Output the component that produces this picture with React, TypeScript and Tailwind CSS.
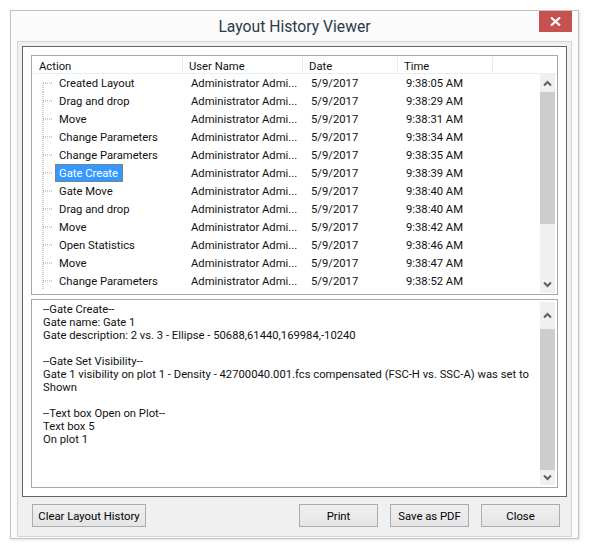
const rows = [
  ["Created Layout", "9:38:05 AM"],
  ["Drag and drop", "9:38:29 AM"],
  ["Move", "9:38:31 AM"],
  ["Change Parameters", "9:38:34 AM"],
  ["Change Parameters", "9:38:35 AM"],
  ["Gate Create", "9:38:39 AM"],
  ["Gate Move", "9:38:40 AM"],
  ["Drag and drop", "9:38:40 AM"],
  ["Move", "9:38:42 AM"],
  ["Open Statistics", "9:38:46 AM"],
  ["Move", "9:38:47 AM"],
  ["Change Parameters", "9:38:52 AM"],
];

const details = [
  "--Gate Create--",
  "Gate name: Gate 1",
  "Gate description: 2 vs. 3 - Ellipse - 50688,61440,169984,-10240",
  "",
  "--Gate Set Visibility--",
  "Gate 1 visibility on plot 1 - Density - 42700040.001.fcs compensated (FSC-H vs. SSC-A) was set to",
  "Shown",
  "",
  "--Text box Open on Plot--",
  "Text box 5",
  "On plot 1",
];

const Chevron = ({ down }: { down?: boolean }) => (
  <svg width="9" height="7" viewBox="0 0 9 7" fill="none">
    <path
      d={down ? "M1 1.5 L4.5 5 L8 1.5" : "M1 5.5 L4.5 2 L8 5.5"}
      stroke="#5f5f5f"
      strokeWidth="2"
    />
  </svg>
);

const Scrollbar = ({ top, thumb, bottom }: { top: number; thumb: number; bottom: number }) => (
  <div className="w-[15px] h-full flex flex-col bg-[#f0f0f0] shrink-0">
    <div className="flex items-center justify-center shrink-0" style={{ height: top }}>
      <Chevron />
    </div>
    <div className="bg-[#cdcdcd] shrink-0" style={{ height: thumb }} />
    <div className="flex-1" />
    <div className="flex items-center justify-center shrink-0" style={{ height: bottom }}>
      <Chevron down />
    </div>
  </div>
);

const Button = ({ label, className }: { label: string; className: string }) => (
  <button
    className={
      "h-[23px] pt-[3px] border border-[#acacac] bg-gradient-to-b from-[#f0f0f0] to-[#e5e5e5] text-[11.3px] text-black whitespace-nowrap " +
      className
    }
  >
    {label}
  </button>
);

export default function App() {
  return (
    <div className="w-[592px] h-[552px] bg-white pt-[10px] pl-[10px] font-['Roboto',sans-serif] text-[11.25px] text-[#111111]">
      <div className="relative w-[569px] h-[529px] border border-[#c4c4c4] bg-[#fbfbfb] flex flex-col shadow-[1px_1px_3px_rgba(0,0,0,0.12)] pb-[1px] px-[6px]">
        <div className="h-[30px] shrink-0 flex items-center justify-center text-[15.7px] text-[#2b3a4a] pt-[1px]">
          Layout History Viewer
        </div>
        <div className="absolute top-0 right-[6px] w-[33px] h-[21px] bg-[#c75050] flex items-center justify-center">
          <svg width="11" height="9" viewBox="0 0 11 9" fill="none">
            <path d="M1 0.5 L10 8.5 M10 0.5 L1 8.5" stroke="#fff" strokeWidth="2.2" />
          </svg>
        </div>
        <div className="flex-1 border border-[#d4d4d4] bg-[#f0f0f0] flex flex-col pl-[4px] pr-[4px] pt-[4px]">
          <div className="w-[545px] h-[451px] border border-[#646464] bg-white flex flex-col items-center pt-[8px] gap-[4px]">
            <div className="w-[527px] h-[240px] border border-[#a8a8a8] p-[1px] flex flex-col">
              <div className="h-[17px] flex border-b border-[#e6eef8] shrink-0 leading-[19px] whitespace-nowrap">
                <div className="w-[150px] pl-[6px] border-r border-[#e3ecf7]">Action</div>
                <div className="w-[120px] pl-[6px] border-r border-[#e3ecf7]">User Name</div>
                <div className="w-[95px] pl-[6px] border-r border-[#e3ecf7]">Date</div>
                <div className="w-[95px] pl-[6px] border-r border-[#e3ecf7]">Time</div>
              </div>
              <div className="flex-1 flex min-h-0 pr-[1px]">
                <div className="flex-1 min-w-0 overflow-hidden">
                  {rows.map(([action, time], i) => (
                    <div key={i} className="h-[18px] flex items-start leading-[20px] whitespace-nowrap">
                      <div className="w-[150px] h-[18px] flex items-start shrink-0 pl-[9px]">
                        <svg width="10" height="18" viewBox="0 0 10 18" className="shrink-0">
                          <path
                            d={i === 0 ? "M1 9 V18 M1 9 H10" : "M1 0 V18 M1 9 H10"}
                            stroke="#a0a0a0"
                            strokeDasharray="1 1"
                            fill="none"
                          />
                        </svg>
                        {action === "Gate Create" ? (
                          <span className="ml-[3px] pl-[4px] pr-[5px] h-[18px] bg-[#3399ff] text-white outline-1 outline-dotted outline-[#c06a20] -outline-offset-1 leading-[20px]">
                            {action}
                          </span>
                        ) : (
                          <span className="ml-[7px]">{action}</span>
                        )}
                      </div>
                      <div className="w-[120px] pl-[8px] shrink-0">Administrator Admi...</div>
                      <div className="w-[95px] pl-[8px] shrink-0">5/9/2017</div>
                      <div className="pl-[8px]">{time}</div>
                    </div>
                  ))}
                </div>
                <Scrollbar top={18} thumb={132} bottom={18} />
              </div>
            </div>
            <div className="w-[527px] h-[189px] border border-[#a8a8a8] p-[1px] flex">
              <div className="flex-1 min-w-0 pl-[10px] pt-[2px] leading-[13px] whitespace-pre overflow-hidden">
                {details.map((line, i) => (
                  <div key={i} className="h-[13px]">
                    {line}
                  </div>
                ))}
              </div>
              <div className="h-full py-[1px] pr-[1px]">
                <Scrollbar top={27} thumb={141} bottom={15} />
              </div>
            </div>
          </div>
          <div className="flex-1 flex items-start pt-[7px] pl-[10px]">
            <Button label="Clear Layout History" className="w-[114px]" />
            <div className="ml-[153px] flex gap-[12px]">
              <Button label="Print" className="w-[79px]" />
              <Button label="Save as PDF" className="w-[79px]" />
              <Button label="Close" className="w-[79px]" />
            </div>
          </div>
        </div>
      </div>
    </div>
  );
}
